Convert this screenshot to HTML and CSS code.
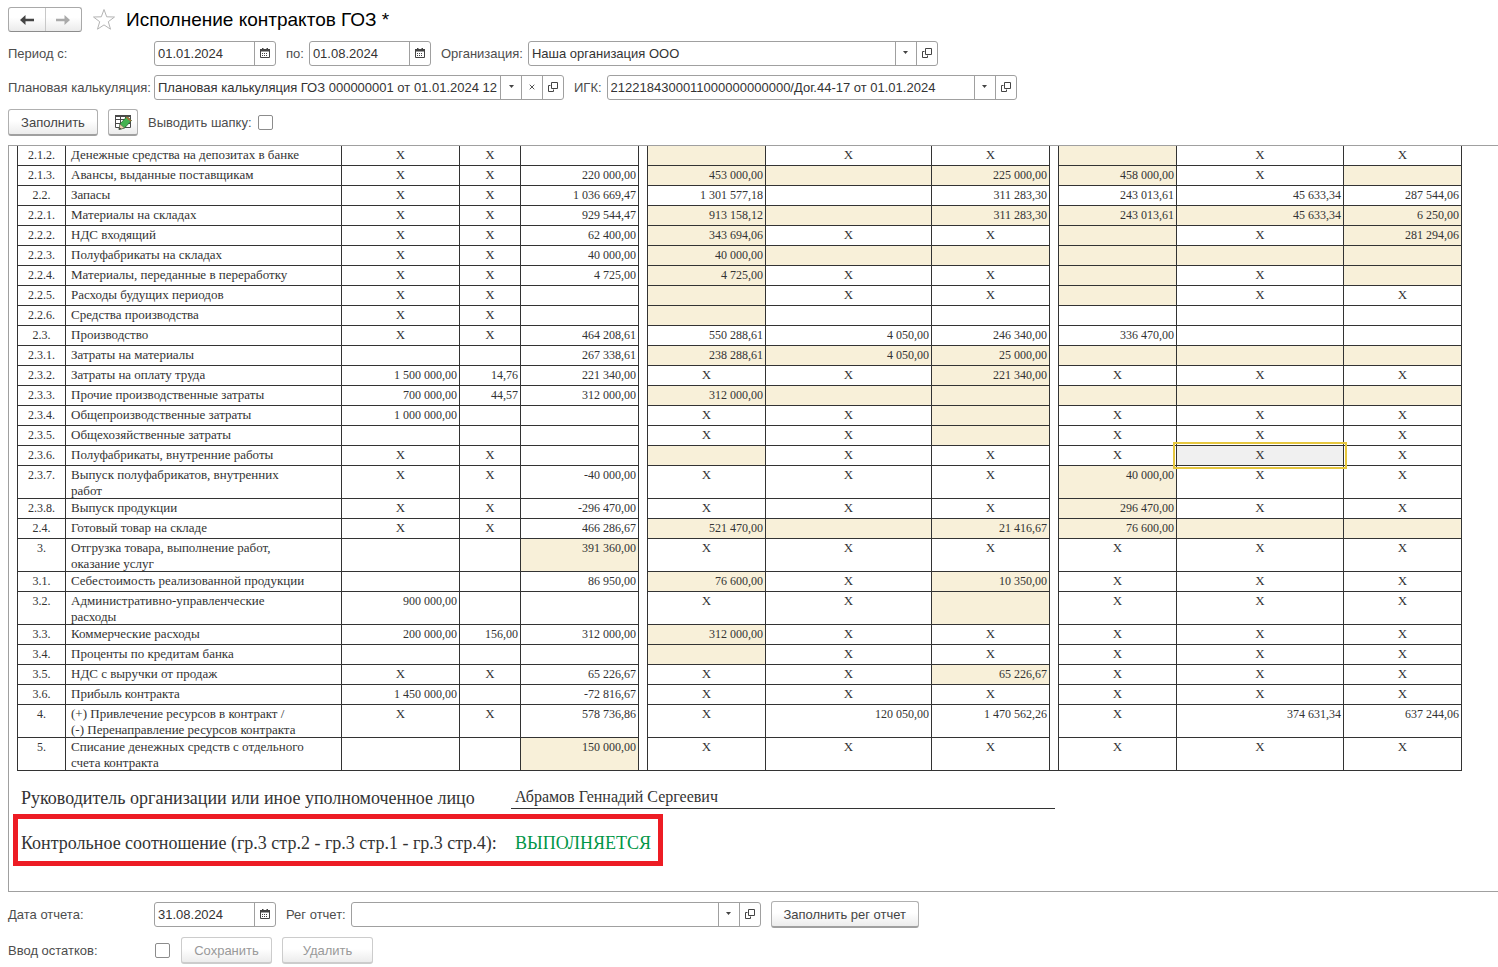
FILE: index.html
```html
<!DOCTYPE html>
<html lang="ru">
<head>
<meta charset="utf-8">
<title>Исполнение контрактов ГОЗ</title>
<link rel="stylesheet" href="styles.css">
</head>
<body>
<svg class="sprite" aria-hidden="true">
  <symbol id="calendar" viewBox="0 0 10 10"><path d="M.5 1.500h9v8h-9z" fill="#fff" stroke="#444"/><path d="M0 1h10v2.500H0zM2 0h1.500v2H2zM6.500 0H8v2H6.500z" fill="#444"/><path d="M2 5h1v1H2zM4 5h1v1H4zM6 5h1v1H6zM2 7h1v1H2zM4 7h1v1H4zM6 7h1v1H6z" fill="#444"/></symbol>
  <symbol id="caret" viewBox="0 0 5 3"><path d="M0 0h5L2.500 3z" fill="#444"/></symbol>
  <symbol id="open" viewBox="0 0 10 10"><path d="M3.500 .5h6v6h-6zM2.500 3.500h-2v6h5v-2" fill="none" stroke="#444"/></symbol>
  <symbol id="clear" viewBox="0 0 6 6"><path d="M.7.7l4.600 4.600M5.300.7L.7 5.300" fill="none" stroke="#555"/></symbol>
</svg>

<header class="titlebar">
  <div class="nav">
    <button class="nav-btn" aria-label="Назад"><svg width="14" height="10" viewBox="0 0 14 10"><path d="M5.500 0v3.800H14v2.400H5.500V10L0 5z" fill="#444"/></svg></button>
    <button class="nav-btn" aria-label="Вперед"><svg width="14" height="10" viewBox="0 0 14 10"><path d="M8.500 0v3.800H0v2.400h8.500V10L14 5z" fill="#aaa"/></svg></button>
  </div>
  <svg class="star" width="24" height="23" viewBox="0 0 24 23"><path d="M12 1.500l2.700 7.300 7.800.2-6.200 4.700 2.200 7.500L12 16.900l-6.500 4.300 2.200-7.500L1.500 9l7.800-.2z" fill="#fff" stroke="#b4b4b4"/></svg>
  <h1 class="title">Исполнение контрактов ГОЗ *</h1>
</header>

<div class="row">
  <label class="label first" for="from">Период с:</label>
  <div class="field date"><input id="from" value="01.01.2024"><button aria-label="Календарь"><svg width="10" height="10"><use href="#calendar"/></svg></button></div>
  <label class="label" for="to">по:</label>
  <div class="field date"><input id="to" value="01.08.2024"><button aria-label="Календарь"><svg width="10" height="10"><use href="#calendar"/></svg></button></div>
  <label class="label" for="org">Организация:</label>
  <div class="field wide"><input id="org" value="Наша организация ООО"><button aria-label="Список"><svg width="5" height="3"><use href="#caret"/></svg></button><button aria-label="Открыть"><svg width="10" height="10"><use href="#open"/></svg></button></div>
</div>

<div class="row">
  <label class="label first" for="plan">Плановая калькуляция:</label>
  <div class="field wide"><input id="plan" value="Плановая калькуляция ГОЗ 000000001 от 01.01.2024 12:00:00"><button aria-label="Список"><svg width="5" height="3"><use href="#caret"/></svg></button><button aria-label="Очистить"><svg width="6" height="6"><use href="#clear"/></svg></button><button aria-label="Открыть"><svg width="10" height="10"><use href="#open"/></svg></button></div>
  <label class="label" for="igk">ИГК:</label>
  <div class="field wide"><input id="igk" value="2122184300011000000000000/Дог.44-17 от 01.01.2024"><button aria-label="Список"><svg width="5" height="3"><use href="#caret"/></svg></button><button aria-label="Открыть"><svg width="10" height="10"><use href="#open"/></svg></button></div>
</div>

<div class="row tools">
  <button class="btn fill">Заполнить</button>
  <button class="btn icon" aria-label="Изменить таблицу"><svg width="17" height="16" viewBox="0 0 17 16"><path d="M.5 1.500h15v12H.5zM.5 5.500h15M.5 9.500h15M5.500 1.500v12M10.500 1.500v12" fill="#fff" stroke="#4a4a4a"/><path d="M0 1h16v2H0z" fill="#4a4a4a"/><path d="M4 15.500l1-5.500L12 2.500l4.500 4L9.500 14z" fill="#45b34f" stroke="#276b2d" stroke-width=".8"/><path d="M4 15.500l1-5.500L9.500 14z" fill="#f0d0a8" stroke="#555" stroke-width=".6"/><path d="M4 15.500l.4-2.200 1.800 1.500z" fill="#333"/><path d="M11 3.600l4.400 4 1.100-1.100-4.500-4z" fill="#b5653a"/></svg></button>
  <label class="label" for="head">Выводить шапку:</label>
  <input class="check" type="checkbox" id="head">
</div>

<main class="sheet">
<table class="report">
<colgroup><col class="w-num"><col class="w-name"><col class="w-sum"><col class="w-pct"><col class="w-sum"><col class="w-gap"><col class="w-sum"><col class="w-mid"><col class="w-sum"><col class="w-gap"><col class="w-sum"><col class="w-far"><col class="w-sum"></colgroup>
<tbody>
<tr><td class="n">2.1.2.</td><td class="t">Денежные средства на депозитах в банке</td><td class="x">X</td><td class="x">X</td><td></td><td class="g"></td><td class="f"></td><td class="x">X</td><td class="x">X</td><td class="g"></td><td class="f"></td><td class="x">X</td><td class="x">X</td></tr>
<tr><td class="n">2.1.3.</td><td class="t">Авансы, выданные поставщикам</td><td class="x">X</td><td class="x">X</td><td>220 000,00</td><td class="g"></td><td class="f">453 000,00</td><td class="f"></td><td class="f">225 000,00</td><td class="g"></td><td class="f">458 000,00</td><td class="x">X</td><td class="f"></td></tr>
<tr><td class="n">2.2.</td><td class="t">Запасы</td><td class="x">X</td><td class="x">X</td><td>1 036 669,47</td><td class="g"></td><td>1 301 577,18</td><td></td><td>311 283,30</td><td class="g"></td><td>243 013,61</td><td>45 633,34</td><td>287 544,06</td></tr>
<tr><td class="n">2.2.1.</td><td class="t">Материалы на складах</td><td class="x">X</td><td class="x">X</td><td>929 544,47</td><td class="g"></td><td class="f">913 158,12</td><td class="f"></td><td class="f">311 283,30</td><td class="g"></td><td class="f">243 013,61</td><td class="f">45 633,34</td><td class="f">6 250,00</td></tr>
<tr><td class="n">2.2.2.</td><td class="t">НДС входящий</td><td class="x">X</td><td class="x">X</td><td>62 400,00</td><td class="g"></td><td class="f">343 694,06</td><td class="x">X</td><td class="x">X</td><td class="g"></td><td class="f"></td><td class="x">X</td><td class="f">281 294,06</td></tr>
<tr><td class="n">2.2.3.</td><td class="t">Полуфабрикаты на складах</td><td class="x">X</td><td class="x">X</td><td>40 000,00</td><td class="g"></td><td class="f">40 000,00</td><td class="f"></td><td class="f"></td><td class="g"></td><td class="f"></td><td class="f"></td><td class="f"></td></tr>
<tr><td class="n">2.2.4.</td><td class="t">Материалы, переданные в переработку</td><td class="x">X</td><td class="x">X</td><td>4 725,00</td><td class="g"></td><td class="f">4 725,00</td><td class="x">X</td><td class="x">X</td><td class="g"></td><td class="f"></td><td class="x">X</td><td class="f"></td></tr>
<tr><td class="n">2.2.5.</td><td class="t">Расходы будущих периодов</td><td class="x">X</td><td class="x">X</td><td></td><td class="g"></td><td class="f"></td><td class="x">X</td><td class="x">X</td><td class="g"></td><td class="f"></td><td class="x">X</td><td class="x">X</td></tr>
<tr><td class="n">2.2.6.</td><td class="t">Средства производства</td><td class="x">X</td><td class="x">X</td><td></td><td class="g"></td><td class="f"></td><td></td><td></td><td class="g"></td><td></td><td></td><td></td></tr>
<tr><td class="n">2.3.</td><td class="t">Производство</td><td class="x">X</td><td class="x">X</td><td>464 208,61</td><td class="g"></td><td>550 288,61</td><td>4 050,00</td><td>246 340,00</td><td class="g"></td><td>336 470,00</td><td></td><td></td></tr>
<tr><td class="n">2.3.1.</td><td class="t">Затраты на материалы</td><td></td><td></td><td>267 338,61</td><td class="g"></td><td class="f">238 288,61</td><td class="f">4 050,00</td><td class="f">25 000,00</td><td class="g"></td><td class="f"></td><td class="f"></td><td class="f"></td></tr>
<tr><td class="n">2.3.2.</td><td class="t">Затраты на оплату труда</td><td>1 500 000,00</td><td>14,76</td><td>221 340,00</td><td class="g"></td><td class="x">X</td><td class="x">X</td><td class="f">221 340,00</td><td class="g"></td><td class="x">X</td><td class="x">X</td><td class="x">X</td></tr>
<tr><td class="n">2.3.3.</td><td class="t">Прочие производственные затраты</td><td>700 000,00</td><td>44,57</td><td>312 000,00</td><td class="g"></td><td class="f">312 000,00</td><td class="f"></td><td class="f"></td><td class="g"></td><td class="f"></td><td class="f"></td><td class="f"></td></tr>
<tr><td class="n">2.3.4.</td><td class="t">Общепроизводственные затраты</td><td>1 000 000,00</td><td></td><td></td><td class="g"></td><td class="x">X</td><td class="x">X</td><td class="f"></td><td class="g"></td><td class="x">X</td><td class="x">X</td><td class="x">X</td></tr>
<tr><td class="n">2.3.5.</td><td class="t">Общехозяйственные затраты</td><td></td><td></td><td></td><td class="g"></td><td class="x">X</td><td class="x">X</td><td class="f"></td><td class="g"></td><td class="x">X</td><td class="x">X</td><td class="x">X</td></tr>
<tr><td class="n">2.3.6.</td><td class="t">Полуфабрикаты, внутренние работы</td><td class="x">X</td><td class="x">X</td><td></td><td class="g"></td><td class="f"></td><td class="x">X</td><td class="x">X</td><td class="g"></td><td class="x">X</td><td class="x selected">X</td><td class="x">X</td></tr>
<tr><td class="n">2.3.7.</td><td class="t"><div class="two">Выпуск полуфабрикатов, внутренних<br>работ</div></td><td class="x">X</td><td class="x">X</td><td>-40 000,00</td><td class="g"></td><td class="x">X</td><td class="x">X</td><td class="x">X</td><td class="g"></td><td class="f">40 000,00</td><td class="x">X</td><td class="x">X</td></tr>
<tr><td class="n">2.3.8.</td><td class="t">Выпуск продукции</td><td class="x">X</td><td class="x">X</td><td>-296 470,00</td><td class="g"></td><td class="x">X</td><td class="x">X</td><td class="x">X</td><td class="g"></td><td class="f">296 470,00</td><td class="x">X</td><td class="x">X</td></tr>
<tr><td class="n">2.4.</td><td class="t">Готовый товар на складе</td><td class="x">X</td><td class="x">X</td><td>466 286,67</td><td class="g"></td><td class="f">521 470,00</td><td class="f"></td><td class="f">21 416,67</td><td class="g"></td><td class="f">76 600,00</td><td class="f"></td><td class="f"></td></tr>
<tr><td class="n">3.</td><td class="t"><div class="two">Отгрузка товара, выполнение работ,<br>оказание услуг</div></td><td></td><td></td><td class="f">391 360,00</td><td class="g"></td><td class="x">X</td><td class="x">X</td><td class="x">X</td><td class="g"></td><td class="x">X</td><td class="x">X</td><td class="x">X</td></tr>
<tr><td class="n">3.1.</td><td class="t">Себестоимость реализованной продукции</td><td></td><td></td><td>86 950,00</td><td class="g"></td><td class="f">76 600,00</td><td class="x">X</td><td class="f">10 350,00</td><td class="g"></td><td class="x">X</td><td class="x">X</td><td class="x">X</td></tr>
<tr><td class="n">3.2.</td><td class="t"><div class="two">Административно-управленческие<br>расходы</div></td><td>900 000,00</td><td></td><td></td><td class="g"></td><td class="x">X</td><td class="x">X</td><td class="f"></td><td class="g"></td><td class="x">X</td><td class="x">X</td><td class="x">X</td></tr>
<tr><td class="n">3.3.</td><td class="t">Коммерческие расходы</td><td>200 000,00</td><td>156,00</td><td>312 000,00</td><td class="g"></td><td class="f">312 000,00</td><td class="x">X</td><td class="x">X</td><td class="g"></td><td class="x">X</td><td class="x">X</td><td class="x">X</td></tr>
<tr><td class="n">3.4.</td><td class="t">Проценты по кредитам банка</td><td></td><td></td><td></td><td class="g"></td><td class="f"></td><td class="x">X</td><td class="x">X</td><td class="g"></td><td class="x">X</td><td class="x">X</td><td class="x">X</td></tr>
<tr><td class="n">3.5.</td><td class="t">НДС с выручки от продаж</td><td class="x">X</td><td class="x">X</td><td>65 226,67</td><td class="g"></td><td class="x">X</td><td class="x">X</td><td class="f">65 226,67</td><td class="g"></td><td class="x">X</td><td class="x">X</td><td class="x">X</td></tr>
<tr><td class="n">3.6.</td><td class="t">Прибыль контракта</td><td>1 450 000,00</td><td></td><td>-72 816,67</td><td class="g"></td><td class="x">X</td><td class="x">X</td><td class="x">X</td><td class="g"></td><td class="x">X</td><td class="x">X</td><td class="x">X</td></tr>
<tr><td class="n">4.</td><td class="t"><div class="two">(+) Привлечение ресурсов в контракт /<br>(-) Перенаправление ресурсов контракта</div></td><td class="x">X</td><td class="x">X</td><td>578 736,86</td><td class="g"></td><td class="x">X</td><td>120 050,00</td><td>1 470 562,26</td><td class="g"></td><td class="x">X</td><td>374 631,34</td><td>637 244,06</td></tr>
<tr><td class="n">5.</td><td class="t"><div class="two">Списание денежных средств с отдельного<br>счета контракта</div></td><td></td><td></td><td class="f">150 000,00</td><td class="g"></td><td class="x">X</td><td class="x">X</td><td class="x">X</td><td class="g"></td><td class="x">X</td><td class="x">X</td><td class="x">X</td></tr>
</tbody>
</table>
<div class="sign"><span class="sign-label">Руководитель организации или иное уполномоченное лицо</span><span class="sign-name">Абрамов Геннадий Сергеевич</span></div>
<div class="control"><span>Контрольное соотношение (гр.3 стр.2 - гр.3 стр.1 - гр.3 стр.4):</span><span class="ok">ВЫПОЛНЯЕТСЯ</span></div>
</main>

<div class="row">
  <label class="label first" for="rdate">Дата отчета:</label>
  <div class="field date"><input id="rdate" value="31.08.2024"><button aria-label="Календарь"><svg width="10" height="10"><use href="#calendar"/></svg></button></div>
  <label class="label" for="reg">Рег отчет:</label>
  <div class="field wide"><input id="reg" value=""><button aria-label="Список"><svg width="5" height="3"><use href="#caret"/></svg></button><button aria-label="Открыть"><svg width="10" height="10"><use href="#open"/></svg></button></div>
  <button class="btn reg">Заполнить рег отчет</button>
</div>

<div class="row last">
  <label class="label first" for="rest">Ввод остатков:</label>
  <input class="check" type="checkbox" id="rest">
  <button class="btn small" disabled>Сохранить</button>
  <button class="btn small" disabled>Удалить</button>
</div>
</body>
</html>
```
FILE: styles.css
```css
* { box-sizing: border-box; }

body {
  margin: 0;
  padding: 7px 0 0 8px;
  min-height: 100vh;
  display: flex;
  flex-direction: column;
  background: #fff;
  color: #333;
  font: 13px/16px "Liberation Sans", Arial, sans-serif;
}

.sprite { position: absolute; width: 0; height: 0; }

button, input { font: inherit; color: inherit; margin: 0; }

.titlebar { display: flex; align-items: center; height: 25px; margin-bottom: 4px; }
.nav {
  display: flex;
  width: 74px;
  height: 25px;
  border: 1px solid #a9a9a9;
  border-bottom-color: #8c8c8c;
  border-radius: 3px;
  background: linear-gradient(#fff 40%, #ebebeb);
}
.nav-btn {
  flex: 1;
  display: flex;
  align-items: center;
  justify-content: center;
  padding: 0;
  border: 0;
  background: none;
}
.nav-btn + .nav-btn { border-left: 1px solid #c8c8c8; }
.star { margin: 0 10px; }
.title { margin: 0; font-size: 19px; line-height: 24px; font-weight: 400; color: #000; }

.row { display: flex; align-items: center; min-height: 34px; }
.row.last { margin-top: 2px; }
.label { color: #4d4d4d; white-space: nowrap; padding: 2px 5px 0 10px; }
.label.first { width: 146px; padding: 2px 0 0; }

.field {
  display: flex;
  height: 25px;
  border: 1px solid #a0a0a0;
  border-radius: 3px;
  background: #fff;
}
.field.date { width: 122px; }
.field.wide { width: 410px; }
.field input {
  flex: 1;
  min-width: 0;
  margin-right: 3px;
  padding: 2px 0 0 3px;
  border: 0;
  outline: 0;
  background: none;
}
.field button {
  display: flex;
  align-items: center;
  justify-content: center;
  width: 21px;
  padding: 0 0 1px;
  border: 0;
  border-left: 1px solid #a0a0a0;
  background: none;
}

.btn {
  display: flex;
  align-items: center;
  justify-content: center;
  height: 27px;
  padding: 2px 0 0;
  border: 1px solid #b0b0b0;
  border-bottom: 2px solid #a0a0a0;
  border-radius: 3px;
  background: linear-gradient(#fff 45%, #ececec);
  color: #444;
  white-space: nowrap;
}
.btn:disabled { color: #999; border-color: #ccc; }
.btn.fill { width: 90px; }
.btn.icon { width: 30px; margin-left: 10px; padding: 0; }
.btn.reg { width: 148px; margin-left: 10px; }
.btn.small { width: 91px; margin-left: 10px; }

.tools { min-height: 41px; padding-bottom: 5px; }

.check {
  appearance: none;
  width: 15px;
  height: 15px;
  margin: 0 1px;
  border: 1px solid #8c8c8c;
  border-radius: 2px;
  background: #fff;
}

.sheet {
  flex: 1;
  overflow: hidden;
  margin-bottom: 5px;
  border: 1px solid #a0a0a0;
  border-right: 0;
  font-family: "Liberation Serif", "Times New Roman", serif;
}

.report {
  width: 1445px;
  margin-left: 8px;
  table-layout: fixed;
  border-collapse: collapse;
  border-bottom: 1px solid #333;
}
.w-num { width: 48px; }
.w-name { width: 276px; }
.w-sum { width: 118px; }
.w-pct { width: 61px; }
.w-gap { width: 9px; }
.w-mid { width: 166px; }
.w-far { width: 167px; }

.report tr { height: 20px; }
.report tr:first-child { height: 19px; }
.report td {
  padding: 1px 2px 0;
  border: 1px solid #333;
  font-size: 12px;
  line-height: 16px;
  text-align: right;
  vertical-align: top;
  white-space: nowrap;
}
.report tr:first-child td { border-top: 0; }
.report td.g { padding: 0; border-width: 0 1px; }
.report td.n { text-align: center; }
.report td.t { padding: 1px 5px 0; font-size: 13px; text-align: left; }
.report .two { height: 31px; }
.report td.x { font-size: 13px; text-align: center; }
.report td.f { background: #f8f0d9; }
.report td.selected { position: relative; background: #f0f0f0; }
.report td.selected::after {
  content: "";
  position: absolute;
  inset: -4px;
  border: 2px solid #e6c73f;
}

.sign { display: flex; align-items: flex-end; margin: 15px 0 0 12px; font-size: 18px; line-height: 22px; }
.sign-label { width: 490px; }
.sign-name { width: 544px; padding-left: 4px; border-bottom: 1px solid #333; font-size: 16px; }

.control {
  display: flex;
  align-items: center;
  width: 650px;
  height: 52px;
  margin: 5px 0 0 4px;
  padding: 6px 3px 0;
  border: 5px solid #ed1c24;
  font-size: 18px;
  line-height: 22px;
  white-space: nowrap;
}
.control span:first-child { width: 494px; }
.ok { color: #009646; }
```
